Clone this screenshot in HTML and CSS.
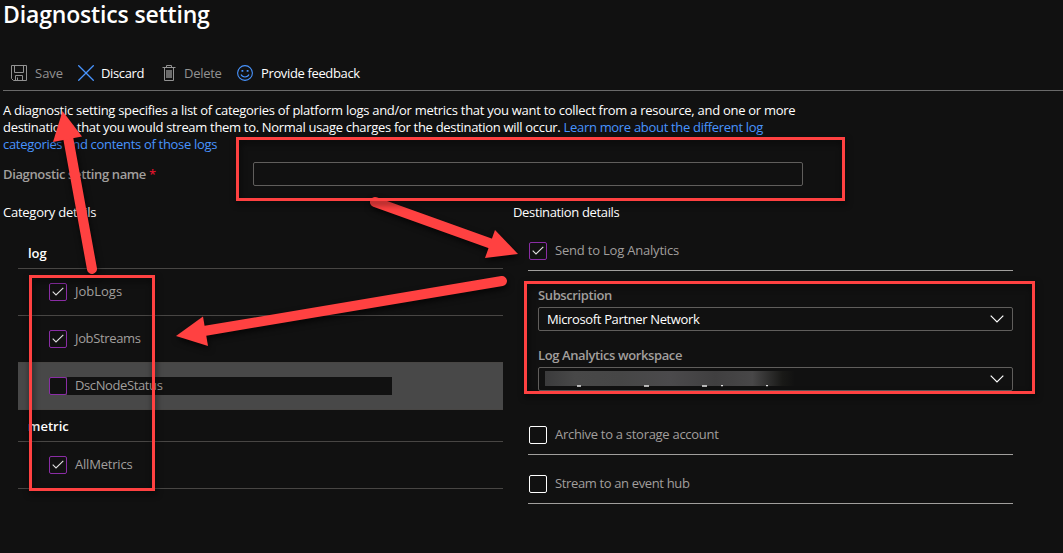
FILE: index.html
```html
<!DOCTYPE html>
<html lang="en">
<head>
<meta charset="utf-8">
<title>Diagnostics setting</title>
<link rel="stylesheet" href="styles.css">
</head>
<body>
<main class="page">
  <h1 class="title"><span class="t-title">Diagnostics setting</span></h1>

  <div class="toolbar">
    <button class="tool tool-save off">
      <svg width="16" height="16" viewBox="0 0 16 16" fill="none" stroke="#929292"><path d="M.5.5h15v15h-13l-2-2zM3.5.5v7h9v-7M4.500 15.500v-5h7v5M6.500 12.500v3" /></svg>
      <span class="t-save">Save</span>
    </button>
    <button class="tool tool-discard">
      <svg width="16" height="16" viewBox="0 0 16 16" fill="none" stroke="#4894fe" stroke-width="1.300"><path d="M.3.3l15.400 15.400M15.700.3L.3 15.700" /></svg>
      <span class="t-discard">Discard</span>
    </button>
    <button class="tool tool-delete off">
      <svg width="14" height="16" viewBox="0 0 14 16" fill="none" stroke="#929292"><path d="M.5 2.500h13M4.500 2.500v-2h5v2M2.500 2.500v13h9v-13" /><path d="M4 5h6v8H4z" fill="#6b6b6b" stroke="none" /></svg>
      <span class="t-delete">Delete</span>
    </button>
    <button class="tool tool-feedback">
      <svg width="16" height="16" viewBox="0 0 16 16" fill="none" stroke="#4894fe" stroke-width="1.100"><circle cx="8" cy="8" r="7.400" /><path d="M4 9.500c1.500 3.300 6.500 3.300 8 0" /><path d="M4.500 5h1.800v1.800H4.500zM9.700 5h1.800v1.800H9.700z" fill="#4894fe" stroke="none" /></svg>
      <span class="t-feedback">Provide feedback</span>
    </button>
  </div>

  <p class="intro"><span class="t-l1">A diagnostic setting specifies a list of categories of platform logs and/or metrics that you want to collect from a resource, and one or more</span><br><span class="t-l2">destinations that you would stream them to. Normal usage charges for the destination will occur. <a>Learn more about the different log</a></span><br><a class="t-l3">categories and contents of those logs</a></p>

  <div class="name-row">
    <label class="semi t-name" for="name">Diagnostic setting name <span class="required">*</span></label>
    <input class="name-input" id="name" type="text">
  </div>

  <div class="columns">
    <section class="categories">
      <h2 class="heading"><span class="t-cat">Category details</span></h2>
      <div class="table">
        <div class="group group-log"><span class="t-log">log</span></div>
        <div class="item"><span class="box"><svg class="check" viewBox="0 0 12 9"><path d="M.7 4.700l3.300 3.300L11.300.8" /></svg></span><span class="t-job">JobLogs</span></div>
        <div class="item"><span class="box"><svg class="check" viewBox="0 0 12 9"><path d="M.7 4.700l3.300 3.300L11.300.8" /></svg></span><span class="t-streams">JobStreams</span></div>
        <div class="item hovered"><span class="box"></span><span class="band"><span class="t-dsc">DscNodeStatus</span></span></div>
        <div class="group group-metric"><span class="t-metric">metric</span></div>
        <div class="item"><span class="box"><svg class="check" viewBox="0 0 12 9"><path d="M.7 4.700l3.300 3.300L11.300.8" /></svg></span><span class="t-all">AllMetrics</span></div>
      </div>
    </section>

    <section class="destinations">
      <h2 class="heading"><span class="t-dest">Destination details</span></h2>
      <div class="target target-log"><span class="box"><svg class="check" viewBox="0 0 12 9"><path d="M.7 4.700l3.300 3.300L11.300.8" /></svg></span><span class="t-send">Send to Log Analytics</span></div>
      <div class="fields">
        <div class="semi field-label"><span class="t-sub">Subscription</span></div>
        <div class="select"><span class="t-mpn">Microsoft Partner Network</span><svg class="chevron" viewBox="0 0 14 8"><path d="M.7.7L7 7 13.300.7" /></svg></div>
        <div class="semi field-label second"><span class="t-work">Log Analytics workspace</span></div>
        <div class="select redacted"><span class="smudge"></span><svg class="tails" width="200" height="2" viewBox="0 0 200 2"><path d="M0 1h4M67 1h5M125 1h5M144 .5h2M189 .5h2" stroke="#e4e4e4" stroke-width="1.500" /></svg><svg class="chevron" viewBox="0 0 14 8"><path d="M.7.7L7 7 13.300.7" /></svg></div>
      </div>
      <div class="target target-storage"><span class="box plain"></span><span class="t-arch">Archive to a storage account</span></div>
      <div class="target target-hub"><span class="box plain"></span><span class="t-hub">Stream to an event hub</span></div>
    </section>
  </div>

  <svg class="marks" width="1063" height="553" viewBox="0 0 1063 553">
    <g class="arrow">
      <path class="shaft" d="M375 202L492 244" />
      <path class="head" d="M518 254L495 230L485 258z" />
    </g>
    <g class="arrow">
      <path class="shaft" d="M502 281L204 331" />
      <path class="head" d="M176 336L203 316.500L208 346z" />
    </g>
    <g class="arrow">
      <path class="shaft" d="M92 269L68 137" />
      <path class="head" d="M62.500 111L53 142L82 136.500z" />
    </g>
    <g class="frames">
      <path d="M237.500 138.500h606v61h-606z" />
      <path d="M30.500 276.500h123v213h-123z" />
      <path d="M525.500 282.500h508v110h-508z" />
    </g>
  </svg>
</main>
</body>
</html>
```
FILE: styles.css
```css
* { box-sizing: border-box; }
body { margin: 0; background: #111; color: #fff; font: 13px/17px "Open Sans", "Noto Sans", sans-serif; }
.page { position: relative; width: 1063px; height: 553px; overflow: hidden; background: #111; white-space: nowrap; }
.title { margin: 0; padding: 0 0 0 3px; height: 55px; font-size: 23px; line-height: 28px; font-weight: 600; }

.toolbar { display: flex; align-items: center; height: 36px; margin-left: 3px; border-bottom: 1px solid #6a6a6a; }
.tool { display: flex; align-items: center; gap: 8px; padding: 0; border: 0; background: none; color: #fff; font: inherit; }
.tool svg { flex: none; }
.tool span { padding-top: 1px; }
.off { color: #929292; }
.tool-save { width: 67px; margin-left: 8px; }
.tool-discard { width: 84px; gap: 7px; }
.tool-delete { width: 75px; gap: 8px; }

.intro { margin: 11px 0 0 3px; height: 51px; }
a { color: #4894fe; }
.name-row { display: flex; align-items: center; height: 24px; margin: 9px 0 0 3px; }
.semi { font-weight: 600; color: #a19f9d; }
.name-row label { width: 250px; flex: none; }
.required { color: #d8132a; }
.name-input { width: 550px; height: 24px; padding: 0 8px; border: 1px solid #605e5c; border-radius: 2px; background: #111; color: #fff; }

.columns { display: grid; grid-template-columns: 510px 500px; margin: 18px 0 0 3px; }
.heading { margin: 0; height: 17px; font-size: 13px; line-height: 17px; font-weight: 400; }
.table { width: 485px; margin: 16px 0 0 15px; }
.group { display: flex; align-items: center; height: 32px; padding: 2px 0 0 10px; border-bottom: 1px solid #484644; font-weight: 600; }
.item { display: flex; align-items: center; height: 47px; padding: 0 0 1px 31px; border-bottom: 1px solid #484644; color: #a19f9d; gap: 8px; }
.box { display: flex; align-items: center; justify-content: center; flex: none; width: 18px; height: 18px; border: 1px solid #8a2da5; border-radius: 2px; background: #111; }
.check { width: 12px; height: 9px; fill: none; stroke: #e0e0e0; stroke-width: 1.1; }
.hovered { gap: 0; background: #484848; }
.band { width: 325px; height: 18px; padding-left: 8px; line-height: 17px; background: #111; }

.target { display: flex; align-items: center; gap: 8px; width: 485px; margin-left: 15px; padding-left: 1px; border-bottom: 1px solid #a19f9d; color: #a19f9d; }
.target-log { height: 40px; margin-top: 10px; }
.target-storage { height: 39px; margin-top: 25px; }
.target-hub { height: 49px; padding-top: 10px; }
.target-storage span + span, .target-hub span + span { padding-bottom: 2px; }
.plain { border-color: #fff; }
.fields { width: 475px; margin: 0 0 0 25px; padding-top: 16px; }
.field-label { height: 20px; }
.second { margin-top: 16px; }
.select { display: flex; align-items: center; justify-content: space-between; width: 475px; height: 24px; padding: 0 8px; border: 1px solid #605e5c; border-radius: 2px; }
.chevron { width: 14px; height: 8px; fill: none; stroke: #fff; stroke-width: 1.2; }
.redacted { position: relative; padding-left: 6px; }
.smudge { width: 250px; height: 15px; margin-top: -1px; background: linear-gradient(90deg, #3b3b3c 0, #484848 12%, #464646 30%, #4b4a4c 50%, #403f40 68%, #484748 83%, #191917 95%, #111 100%); }
.tails { position: absolute; left: 38px; top: 17px; }

/* Tracking per label */
.t-title { letter-spacing: -.16px; }
.t-l1 { letter-spacing: -.28px; }
.t-l2, .t-l3 { letter-spacing: -.31px; }
.t-name, .t-mpn, .t-hub, .t-feedback { letter-spacing: -.36px; }
.t-cat { letter-spacing: -.25px; }
.t-dest, .t-discard, .t-streams { letter-spacing: -.35px; }
.t-dsc, .t-sub, .t-work { letter-spacing: -.39px; }
.t-send, .t-all { letter-spacing: -.2px; }
.t-arch, .t-delete { letter-spacing: -.29px; }

.marks { position: absolute; left: 0; top: 0; pointer-events: none; }
.shaft { fill: none; stroke: #ff4141; stroke-width: 10; stroke-linecap: round; }
.head { fill: #ff4141; }
.frames path { fill: none; stroke: #ff4141; stroke-width: 3; }
.arrow, .frames { filter: drop-shadow(1px 3px 3px rgba(0, 0, 0, .7)); }
```
